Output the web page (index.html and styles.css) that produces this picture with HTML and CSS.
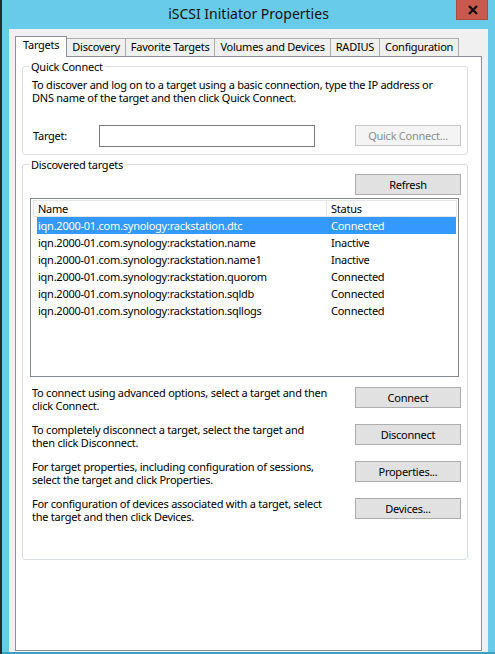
FILE: index.html
```html
<!DOCTYPE html>
<html>
<head>
<meta charset="utf-8">
<title>iSCSI Initiator Properties</title>
<link rel="stylesheet" href="styles.css">
</head>
<body>
<div class="screen">
  <div class="edge"></div>
  <div class="window">
    <div class="titlebar">
      <div></div>
      <div class="title">iSCSI Initiator Properties</div>
      <div class="tb-right">
        <div class="close">
          <svg width="10" height="10" viewBox="0 0 10 10"><path d="M1 1 L9 9 M9 1 L1 9" stroke="#111" stroke-width="2.4" stroke-linecap="butt"/></svg>
        </div>
      </div>
    </div>
    <div class="client">
      <div class="tabs">
        <div class="tab active">Targets</div>
        <div class="tab">Discovery</div>
        <div class="tab">Favorite Targets</div>
        <div class="tab">Volumes and Devices</div>
        <div class="tab">RADIUS</div>
        <div class="tab">Configuration</div>
      </div>
      <div class="panel">
        <fieldset class="group quick">
          <legend>Quick Connect</legend>
          <p class="desc">To discover and log on to a target using a basic connection, type the IP address or<br>DNS name of the target and then click Quick Connect.</p>
          <div class="target-row">
            <span class="label">Target:</span>
            <div class="textbox"></div>
            <div class="btn disabled">Quick Connect...</div>
          </div>
        </fieldset>
        <fieldset class="group discovered">
          <legend>Discovered targets</legend>
          <div class="refresh-row"><div class="btn">Refresh</div></div>
          <div class="list">
            <div class="list-header">
              <div class="hcell hname">Name</div>
              <div class="hcell hstatus">Status</div>
            </div>
            <div class="row selected"><span>iqn.2000-01.com.synology:rackstation.dtc</span><span class="status">Connected</span></div>
            <div class="row"><span>iqn.2000-01.com.synology:rackstation.name</span><span class="status">Inactive</span></div>
            <div class="row"><span>iqn.2000-01.com.synology:rackstation.name1</span><span class="status">Inactive</span></div>
            <div class="row"><span>iqn.2000-01.com.synology:rackstation.quorom</span><span class="status">Connected</span></div>
            <div class="row"><span>iqn.2000-01.com.synology:rackstation.sqldb</span><span class="status">Connected</span></div>
            <div class="row"><span>iqn.2000-01.com.synology:rackstation.sqllogs</span><span class="status">Connected</span></div>
          </div>
          <div class="actions">
            <div class="action">
              <p class="desc">To connect using advanced options, select a target and then<br>click Connect.</p>
              <div class="btn">Connect</div>
            </div>
            <div class="action">
              <p class="desc">To completely disconnect a target, select the target and<br>then click Disconnect.</p>
              <div class="btn">Disconnect</div>
            </div>
            <div class="action">
              <p class="desc">For target properties, including configuration of sessions,<br>select the target and click Properties.</p>
              <div class="btn">Properties...</div>
            </div>
            <div class="action">
              <p class="desc">For configuration of devices associated with a target, select<br>the target and then click Devices.</p>
              <div class="btn">Devices...</div>
            </div>
          </div>
        </fieldset>
      </div>
    </div>
  </div>
</div>
</body>
</html>
```

FILE: styles.css
```css
* { box-sizing: border-box; }

html, body {
  margin: 0;
  padding: 0;
}

body {
  width: 495px;
  height: 654px;
  overflow: hidden;
  font-family: "Noto Sans", "Open Sans", sans-serif;
  font-size: 11px;
  letter-spacing: -0.25px;
  color: #000;
  background: #69cbea;
}

.screen {
  display: flex;
  height: 654px;
}

.edge {
  width: 2px;
  background: #2b2b2b;
}

.window {
  flex: 1;
  display: flex;
  flex-direction: column;
  background: #69cbea;
  padding: 0 7px;
  border-bottom: 2px solid #3d9fc3;
}

.titlebar {
  height: 29px;
  display: grid;
  grid-template-columns: 1fr auto 1fr;
  align-items: start;
}

.title {
  font-size: 14px;
  letter-spacing: 0;
  line-height: 28px;
  color: #111;
  white-space: nowrap;
}

.tb-right {
  display: flex;
  justify-content: flex-end;
}

.close {
  width: 32px;
  height: 20px;
  background: #c75a4d;
  border: 1px solid #b04a3f;
  border-top: none;
  display: flex;
  align-items: center;
  justify-content: center;
}

.close svg {
  display: block;
  margin-left: 1px;
}

.client {
  flex: 1;
  background: #f0f0f0;
  padding: 7px 6px 1px 6px;
  display: flex;
  flex-direction: column;
}

.tabs {
  display: flex;
  align-items: flex-end;
  height: 20px;
  position: relative;
  z-index: 1;
}

.tab {
  height: 18px;
  padding: 0 5px;
  line-height: 16px;
  border: 1px solid #acacac;
  border-bottom: none;
  background: #f0f0f0;
  margin-left: -1px;
  white-space: nowrap;
}

.tab.active {
  height: 21px;
  margin-bottom: -1px;
  margin-left: 0;
  padding: 0 7px;
  background: #fff;
  border-color: #8e9098;
  position: relative;
  z-index: 2;
}

.panel {
  flex: 1;
  background: #fff;
  border: 1px solid #8e9098;
  padding: 0 13px 0 6px;
}

.group {
  margin: 3px 0 0 0;
  border: 1px solid #d9dee2;
  border-radius: 3px;
  padding: 5px 6px 7px 9px;
  min-width: 0;
}

.group legend {
  padding: 0 2px;
  margin-left: -3px;
  line-height: 13px;
}

.desc {
  margin: 0;
  line-height: 13.3px;
  white-space: nowrap;
}

.target-row {
  margin-top: 20px;
  display: flex;
  align-items: center;
  height: 22px;
}

.label {
  width: 67px;
  padding-left: 1px;
}

.textbox {
  width: 216px;
  height: 22px;
  border: 1px solid #7a7a7a;
  background: #fff;
}

.btn {
  width: 106px;
  height: 21px;
  line-height: 19px;
  text-align: center;
  background: #e1e1e1;
  border: 1px solid #adadad;
  white-space: nowrap;
}

.target-row .btn {
  margin-left: auto;
}

.btn.disabled {
  background: #f4f4f4;
  border-color: #c6c6c6;
  color: #8d8d8d;
}

.discovered {
  padding: 3px 6px 36px 9px;
}

.refresh-row {
  display: flex;
  justify-content: flex-end;
}

.list {
  margin: 3px 2px 0 -2px;
  height: 179px;
  border: 1px solid #828790;
  padding: 1px;
}

.list-header {
  display: grid;
  grid-template-columns: 293px 1fr;
  height: 17px;
  margin: 0 0 0 1px;
  border: 1px solid #e5e5e5;
  line-height: 15px;
}

.hname {
  padding-left: 4px;
  border-right: 1px solid #e5e5e5;
}

.hstatus {
  padding-left: 4px;
}

.row {
  display: grid;
  grid-template-columns: 289px 1fr;
  height: 17px;
  line-height: 17px;
  margin: 0 1px 0 5px;
  padding-left: 1px;
  white-space: nowrap;
}

.row .status {
  padding-left: 4px;
}

.row.selected {
  background: #3399ff;
  color: #fff;
}

.actions {
  margin-top: 9px;
  display: flex;
  flex-direction: column;
  gap: 10.5px;
}

.action {
  display: flex;
  justify-content: space-between;
  align-items: flex-start;
}

.action .btn {
  margin-top: 1px;
}
```
